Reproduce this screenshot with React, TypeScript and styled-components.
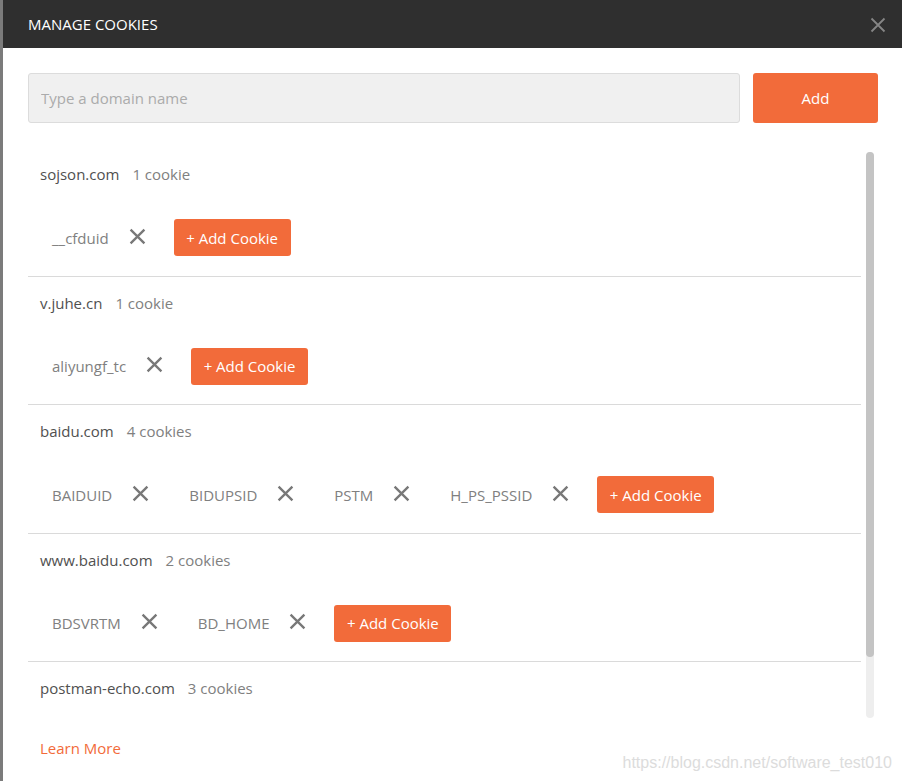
import * as React from 'react';
import styled, { createGlobalStyle } from 'styled-components';

interface IDomain {
  domain: string;
  cookies: string[];
}

const domains: IDomain[] = [
  { domain: 'sojson.com', cookies: ['__cfduid'] },
  { domain: 'v.juhe.cn', cookies: ['aliyungf_tc'] },
  { domain: 'baidu.com', cookies: ['BAIDUID', 'BIDUPSID', 'PSTM', 'H_PS_PSSID'] },
  { domain: 'www.baidu.com', cookies: ['BDSVRTM', 'BD_HOME'] },
  { domain: 'postman-echo.com', cookies: ['foo1', 'foo2', 'sails.sid'] },
];

const Cross = ({ size, width }: { size: number; width: number }) => (
  <svg width={size} height={size} viewBox="0 0 16 16">
    <path d="M1.5 1.5 L14.5 14.5 M14.5 1.5 L1.5 14.5" stroke="currentColor" strokeWidth={width} />
  </svg>
);

export default () => (
  <>
    <GlobalStyle />
    <Dialog>
      <Header>
        <Title>MANAGE COOKIES</Title>
        <CloseButton><Cross size={16} width={1.8} /></CloseButton>
      </Header>
      <Body>
        <DomainForm>
          <DomainInput placeholder="Type a domain name" />
          <AddButton>Add</AddButton>
        </DomainForm>
        <ListFrame>
          <DomainList>
            {domains.map(({ domain, cookies }, i) => (
              <Section key={domain}>
                <DomainLine>
                  <DomainName>{domain}</DomainName>
                  <Count>{cookies.length} {cookies.length === 1 ? 'cookie' : 'cookies'}</Count>
                </DomainLine>
                {/* the last domain's cookies sit below the fold */}
                {i < domains.length - 1 && (
                  <CookieRow>
                    {cookies.map(cookie => (
                      <Chip key={cookie}>
                        <span>{cookie}</span>
                        <Remove><Cross size={17} width={2.2} /></Remove>
                      </Chip>
                    ))}
                    <AddCookie>+ Add Cookie</AddCookie>
                  </CookieRow>
                )}
              </Section>
            ))}
          </DomainList>
          <ScrollTrack>
            <ScrollThumb />
          </ScrollTrack>
        </ListFrame>
        <LearnMore href="#">Learn More</LearnMore>
      </Body>
      <Watermark>https://blog.csdn.net/software_test010</Watermark>
    </Dialog>
  </>
);

const GlobalStyle = createGlobalStyle`
  html, body {
    margin: 0;
    height: 100%;
    background: #7b7b7b;
    overflow: hidden;
  }
  #root {
    height: 100%;
  }
  * {
    box-sizing: border-box;
  }
`;

const Dialog = styled.div`
  position: relative;
  margin-left: 3px;
  height: 781px;
  background: #fff;
  display: flex;
  flex-direction: column;
  font-family: 'Open Sans', 'Noto Sans', sans-serif;
  font-size: 15px;
`;

const Header = styled.div`
  height: 48px;
  flex-shrink: 0;
  background: #2f2f2f;
  display: flex;
  align-items: center;
  justify-content: space-between;
  padding: 0 16px 0 25px;
`;

const Title = styled.div`
  color: #fff;
  font-size: 15px;
  font-weight: 400;
`;

const CloseButton = styled.div`
  color: #858585;
  display: flex;
  margin-top: 1px;
`;

const Body = styled.div`
  flex: 1;
  display: flex;
  flex-direction: column;
  padding: 25px 24px 23px 25px;
  min-height: 0;
`;

const DomainForm = styled.div`
  display: flex;
  gap: 13px;
  height: 50px;
  flex-shrink: 0;
`;

const DomainInput = styled.input`
  flex: 1;
  height: 50px;
  background: #f0f0f0;
  border: 1px solid #dcdcdc;
  border-radius: 3px;
  padding: 0 12px;
  font-family: inherit;
  font-size: 15px;
  color: #505050;
  outline: none;
  &::placeholder {
    color: #ababab;
  }
`;

const AddButton = styled.button`
  width: 125px;
  height: 50px;
  border: none;
  border-radius: 3px;
  background: #f26b3a;
  color: #fff;
  font-family: inherit;
  font-size: 15px;
`;

const ListFrame = styled.div`
  display: flex;
  margin-top: 25px;
  margin-right: 4px;
  height: 570px;
  flex-shrink: 0;
`;

const DomainList = styled.div`
  flex: 1;
  overflow: hidden;
`;

const ScrollTrack = styled.div`
  width: 8px;
  margin: 4px 0 0 5px;
  background: #eeeeee;
  border-radius: 4px;
`;

const ScrollThumb = styled.div`
  height: 505px;
  background: #c4c4c4;
  border-radius: 4px;
`;

const Section = styled.div`
  padding: 16px 0 19.6px;
  border-bottom: 1px solid #dadada;
  &:last-child {
    border-bottom: none;
  }
`;

const DomainLine = styled.div`
  display: flex;
  align-items: center;
  height: 20px;
  padding-left: 12px;
`;

const DomainName = styled.span`
  color: #505050;
`;

const Count = styled.span`
  color: #808080;
  margin-left: 13px;
`;

const CookieRow = styled.div`
  display: flex;
  align-items: center;
  margin-top: 35px;
  height: 37px;
  padding-left: 12px;
`;

const Chip = styled.div`
  display: flex;
  align-items: center;
  padding: 0 12px;
  margin-right: 16px;
  color: #808080;
`;

const Remove = styled.span`
  display: flex;
  color: #787878;
  margin-left: 20px;
  margin-top: -3px;
`;

const AddCookie = styled.button`
  height: 37px;
  padding: 0 12.5px;
  border: none;
  border-radius: 3px;
  background: #f26b3a;
  color: #fff;
  font-family: inherit;
  font-size: 15px;
`;

const LearnMore = styled.a`
  margin-top: 20px;
  padding-left: 12px;
  line-height: 20px;
  color: #f26b3a;
  text-decoration: none;
`;

const Watermark = styled.div`
  position: absolute;
  right: 10px;
  bottom: 9px;
  font-family: 'Liberation Sans', Arial, sans-serif;
  font-size: 16px;
  color: #dcdcdc;
`;
